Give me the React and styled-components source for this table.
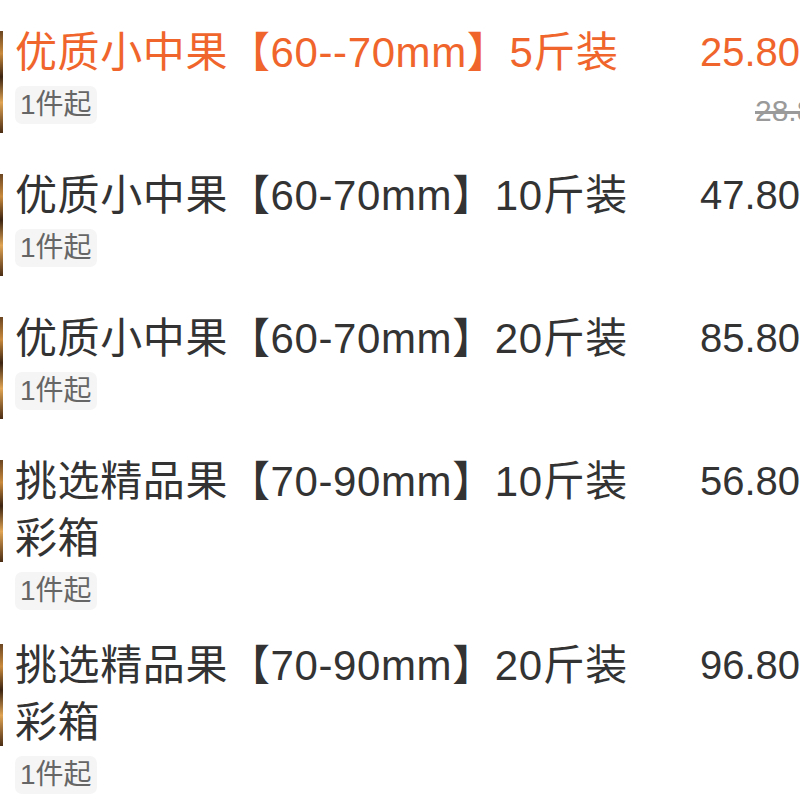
import React from 'react';
import styled, { createGlobalStyle } from 'styled-components';

const GlobalStyle = createGlobalStyle`
    html, body {
        margin: 0;
        padding: 0;
        background: #ffffff;
        overflow: hidden;
    }
    body {
        font-family: "Liberation Sans", "Noto Sans CJK SC", sans-serif;
    }
`;

const items = [
    { title: '优质小中果【60--70mm】5斤装', price: '25.80', old: '28.80', active: true },
    { title: '优质小中果【60-70mm】10斤装', price: '47.80' },
    { title: '优质小中果【60-70mm】20斤装', price: '85.80' },
    { title: '挑选精品果【70-90mm】10斤装彩箱', price: '56.80' },
    { title: '挑选精品果【70-90mm】20斤装彩箱', price: '96.80' },
];

function App() {
    return (
        <>
            <GlobalStyle />
            <List>
                {items.map((item, i) => (
                    <Row key={i}>
                        <Thumb />
                        <Info>
                            <Title $active={item.active}>{item.title}</Title>
                            <Tag>1件起</Tag>
                        </Info>
                        <PriceCol>
                            <Price $active={item.active}>{item.price}</Price>
                            {item.old && <OldPrice>{item.old}</OldPrice>}
                        </PriceCol>
                    </Row>
                ))}
            </List>
        </>
    );
}

const List = styled.div`
    width: 800px;
    height: 800px;
    overflow: hidden;
    display: flex;
    flex-direction: column;
    gap: 27px;
    padding-top: 24px;
    box-sizing: border-box;
`;

const Row = styled.div`
    display: flex;
    align-items: flex-start;
    min-height: 116px;
    flex: none;
`;

// only the rounded right edge of the product photo peeks in at the left
const Thumb = styled.div`
    flex: none;
    width: 3px;
    height: 102px;
    margin: 7px 12px 7px 0;
    background: linear-gradient(180deg, #6b4622 0%, #c98a3c 22%, #3b2412 45%, #e0a453 70%, #4a2c14 100%);
`;

const Info = styled.div`
    flex: none;
    width: 685px;
    display: flex;
    flex-direction: column;
    align-items: flex-start;
`;

const Title = styled.div`
    font-size: 42px;
    line-height: 57px;
    letter-spacing: 0.6px;
    color: ${p => (p.$active ? '#f0652c' : '#333333')};
    width: 650px;
    word-break: break-all;
`;

const Tag = styled.span`
    margin-top: 5px;
    height: 38px;
    line-height: 38px;
    padding: 0 5px;
    font-size: 28px;
    color: #666666;
    background: #f5f5f5;
    border-radius: 7px;
`;

const PriceCol = styled.div`
    flex: none;
    display: flex;
    flex-direction: column;
    align-items: flex-start;
    white-space: nowrap;
`;

const Price = styled.div`
    font-size: 40px;
    line-height: 57px;
    color: ${p => (p.$active ? '#f0652c' : '#333333')};
`;

const OldPrice = styled.div`
    margin-top: 12px;
    margin-left: 55px;
    font-size: 30px;
    line-height: 36px;
    color: #9a9a9a;
    text-decoration: line-through;
`;

export default App;
